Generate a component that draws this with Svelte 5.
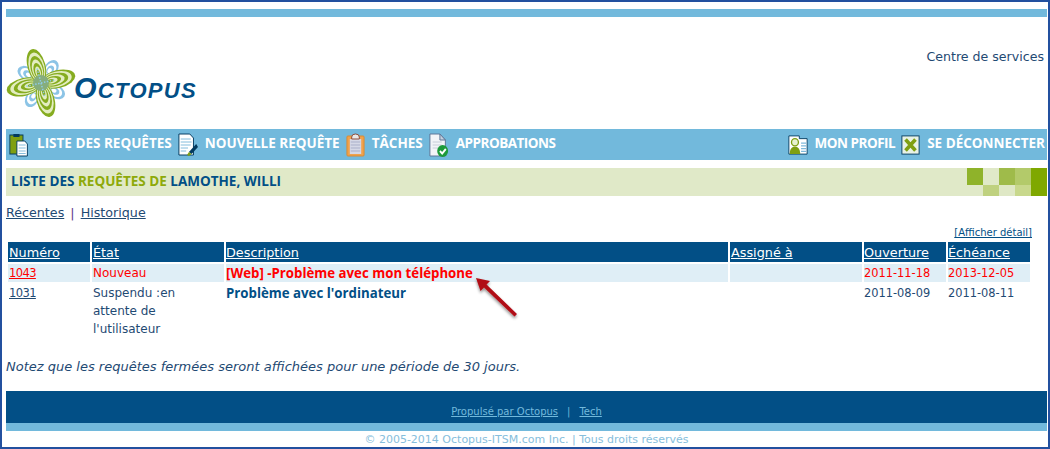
<script>
  const ringsBig = [0, 1, 2, 3, 4, 5, 6];
  const smallRings = [0, 1, 2, 3];
  const bigPetals = [-13, 75];
  const smallPetals = [-147, -55, 30, 120];

  const squares = ['#8fb32a', '#e0e9c8', '#9fbb4a', '#b3ca6a', '#7fa800', '#e0e9c8', '#bfd17f', '#dfe8c6', '#c8d88c', '#7fa800'];

  const columns = ['Numéro', 'État', 'Description', 'Assigné à', 'Ouverture', 'Échéance'];
</script>

<div class="frame">
  <div class="topbar"></div>

  <header class="brand">
    <div class="logo">
      <svg width="70" height="72" viewBox="-35 -36 70 72" aria-hidden="true">
        {#each smallPetals as angle}
          <g transform="rotate({angle}) translate(18 0)">
            {#each smallRings as r}
              <ellipse rx={9 - r * 2.1} ry={6.5 - r * 1.5} cx={-r} fill={r % 2 ? '#ffffff' : '#8cc4e6'} />
            {/each}
          </g>
        {/each}
        {#each bigPetals as angle}
          {#each [-1, 1] as side}
            <g transform="rotate({angle}) translate({side * 17.5} 0)">
              {#each ringsBig as r}
                <ellipse rx={17.5 - r * 2.3} ry={9 - r * 1.25} cx={-side * r * 1.3} fill={r % 2 ? '#e3edc0' : '#86ac20'} />
              {/each}
            </g>
          {/each}
        {/each}
        <circle r="8" fill="#86ad7c" />
        {#each bigPetals as angle}
          <path transform="rotate({angle})" d="M-15 0H15" stroke="#8fcbe6" stroke-width="1.500" stroke-dasharray="1.500 1.500" />
        {/each}
      </svg>
      <span class="wordmark"><span class="big">O</span>CTOPUS</span>
    </div>
    <span class="service">Centre de services</span>
  </header>

  <nav class="nav">
    <div class="nav-group">
      <a class="nav-item">
        <svg width="21" height="24" viewBox="0 0 24 24" preserveAspectRatio="none" aria-hidden="true">
          <rect x="1" y="2" width="15" height="19" fill="#7f9f12" stroke="#023a5e" />
          <rect x="5" y="1" width="7" height="3" fill="#023a5e" />
          <path d="M9 8h9l3 3v12H9z" fill="#fff" stroke="#023a5e" />
          <path d="M11 12h8M11 15h8M11 18h8M11 20.500h8" stroke="#7fb9da" />
        </svg>
        <span>LISTE DES REQUÊTES</span>
      </a>
      <a class="nav-item">
        <svg width="20" height="24" viewBox="0 0 22 24" preserveAspectRatio="none" aria-hidden="true">
          <path d="M1 1h12l4 4v17H1z" fill="#fff" stroke="#023a5e" />
          <path d="M3 6h11M3 9h12M3 12h11M3 15h8M3 18h6" stroke="#7fb9da" />
          <path d="M20 11l2 3-7 7-3-2z" fill="#023a5e" />
          <path d="M12 19l3 2-3 2-2-1z" fill="#7f9f12" />
        </svg>
        <span>NOUVELLE REQUÊTE</span>
      </a>
      <a class="nav-item">
        <svg width="19" height="24" viewBox="0 0 20 24" preserveAspectRatio="none" aria-hidden="true">
          <rect x="1" y="3" width="18" height="20" rx="1" fill="#f0a24c" stroke="#d98a30" />
          <rect x="4" y="6" width="12" height="15" fill="#d5d8e6" />
          <path d="M5 9h10M5 12h10M5 15h10M5 18h10" stroke="#a9aec8" />
          <path d="M6 4a4 3 0 0 1 8 0v2H6z" fill="#e8e8e8" stroke="#8a4a3a" />
        </svg>
        <span>TÂCHES</span>
      </a>
      <a class="nav-item tight">
        <svg width="20" height="24" viewBox="0 0 22 24" preserveAspectRatio="none" aria-hidden="true">
          <path d="M1 1h11l6 6v16H1z" fill="#f2f4f8" stroke="#5a7596" />
          <path d="M12 1v6h6z" fill="#c5d0de" stroke="#5a7596" />
          <path d="M4 9h10M4 12h10M4 15h6" stroke="#c5ccd8" />
          <circle cx="15" cy="18" r="6" fill="#1c9a3a" />
          <path d="M12 18l2.500 2.500 4-4.500" fill="none" stroke="#fff" stroke-width="2" />
        </svg>
        <span>APPROBATIONS</span>
      </a>
    </div>
    <div class="nav-group">
      <a class="nav-item tight">
        <svg width="20" height="20" viewBox="0 0 23 22" preserveAspectRatio="none" aria-hidden="true">
          <path d="M1 1h12v3h9v17H1z" fill="#fff" stroke="#023a5e" />
          <circle cx="8" cy="8" r="4" fill="#e8f2d0" stroke="#7f9f12" stroke-width="1.500" />
          <path d="M2 21c0-6 3-8 6-8s6 2 6 8z" fill="#7f9f12" />
          <path d="M15 9h6M15 12h6M15 15h6M15 18h6" stroke="#7fb9da" stroke-width="1.500" />
        </svg>
        <span>MON PROFIL</span>
      </a>
      <a class="nav-item">
        <svg width="19" height="20" viewBox="0 0 21 22" preserveAspectRatio="none" aria-hidden="true">
          <rect x="1" y="1" width="19" height="20" fill="#e8f2e6" stroke="#023a5e" />
          <path d="M5 5l11 12M16 5L5 17" stroke="#7f9f12" stroke-width="4" />
        </svg>
        <span>SE DÉCONNECTER</span>
      </a>
    </div>
  </nav>

  <div class="band">
    <h1>LISTE DES <em>REQUÊTES DE</em> LAMOTHE, WILLI</h1>
    <div class="squares" aria-hidden="true">
      {#each squares as color}
        <span style="background: {color}"></span>
      {/each}
    </div>
  </div>

  <div class="tabs"><a>Récentes</a> <span class="sep">|</span> <a>Historique</a></div>

  <div class="detail"><a>[Afficher détail]</a></div>

  <div class="table-wrap">
    <table>
      <colgroup>
        <col style="width: 82px" />
        <col style="width: 132px" />
        <col style="width: 502px" />
        <col style="width: 132px" />
        <col style="width: 82px" />
        <col style="width: 82px" />
      </colgroup>
      <thead>
        <tr>
          {#each columns as column}
            <th><a>{column}</a></th>
          {/each}
        </tr>
      </thead>
      <tbody>
        <tr class="new">
          <td class="num"><a>1043</a></td>
          <td>Nouveau</td>
          <td class="desc">[Web] -Problème avec mon téléphone</td>
          <td></td>
          <td class="date">2011-11-18</td>
          <td class="date">2013-12-05</td>
        </tr>
        <tr>
          <td class="num"><a>1031</a></td>
          <td>Suspendu :en<br />attente de<br />l'utilisateur</td>
          <td class="desc">Problème avec l'ordinateur</td>
          <td></td>
          <td class="date">2011-08-09</td>
          <td class="date">2011-08-11</td>
        </tr>
      </tbody>
    </table>
    <svg class="arrow" width="50" height="50" viewBox="0 0 50 50" aria-hidden="true">
      <defs>
        <filter id="arrow-shadow" x="-20%" y="-20%" width="150%" height="150%">
          <feDropShadow dx="0" dy="2" stdDeviation="1.500" flood-color="#000" flood-opacity="0.45" />
        </filter>
      </defs>
      <path filter="url(#arrow-shadow)" fill="#b00c14" d="M3 3l14 3-3.500 3.500L44 39l-2.500 2.500L11 12.500 7.500 16z" />
    </svg>
  </div>

  <p class="note">Notez que les requêtes fermées seront affichées pour une période de 30 jours.</p>

  <footer class="footer">
    <div class="footer-dark"><a>Propulsé par Octopus</a><span class="pipe">|</span><a>Tech</a></div>
    <div class="footer-light"></div>
    <div class="copyright">© 2005-2014 Octopus-ITSM.com Inc. | Tous droits réservés</div>
  </footer>
</div>

<style>
  :global(body) {
    margin: 0;
    background: #fff;
  }

  .frame {
    box-sizing: border-box;
    position: relative;
    width: 1050px;
    height: 449px;
    overflow: hidden;
    border: 2px solid #23509f;
    padding: 7px 1px 0 4px;
    font-family: "DejaVu Sans", Verdana, sans-serif;
    font-size: 12px;
    color: #024f86;
  }

  a {
    color: inherit;
    text-decoration: underline;
  }

  .topbar {
    height: 8px;
    background: #72b9dc;
  }

  .brand {
    height: 112px;
    display: flex;
    justify-content: space-between;
  }

  .logo {
    display: flex;
    align-items: flex-end;
    padding-top: 30px;
    height: 72px;
  }

  .wordmark {
    font-family: "Liberation Sans", Arial, sans-serif;
    font-style: italic;
    font-weight: 700;
    font-size: 22px;
    line-height: 24px;
    letter-spacing: 1.3px;
    color: #024f86;
    margin: 0 0 16px -2px;
  }

  .wordmark .big {
    font-size: 29px;
  }

  .service {
    font-size: 12.6px;
    margin: 32px 3px 0 0;
    color: #1f4a73;
  }

  .nav {
    height: 31px;
    background: #72b9dc;
    display: flex;
    justify-content: space-between;
    align-items: center;
    padding: 0 2px 0 3px;
  }

  .nav-group {
    display: flex;
    gap: 6px;
  }

  .nav-item {
    display: flex;
    align-items: center;
    gap: 7px;
    color: #fff;
    font-family: "Open Sans", "DejaVu Sans", sans-serif;
    font-weight: 700;
    font-size: 13.5px;
    text-decoration: none;
    white-space: nowrap;
  }

  .nav-item span {
    margin-bottom: 3px;
  }

  .tight {
    letter-spacing: -0.5px;
  }

  .band {
    margin-top: 8px;
    height: 28px;
    background: #e0e9c8;
    display: flex;
    justify-content: space-between;
  }

  h1 {
    margin: 0;
    padding-left: 5px;
    font-family: "Open Sans", "DejaVu Sans", sans-serif;
    font-size: 13.5px;
    line-height: 26px;
    font-weight: 700;
    color: #024f86;
  }

  h1 em {
    font-style: normal;
    color: #8ea90a;
  }

  .squares {
    display: grid;
    grid-template-columns: repeat(5, 16px);
    grid-template-rows: 17px 11px;
  }

  .tabs {
    margin-top: 9px;
    line-height: 16px;
    font-size: 12.7px;
    color: #1f4a73;
  }

  .sep {
    color: #5a3a8a;
    margin: 0 2px;
  }

  .detail {
    margin: 6px 15px 0 0;
    text-align: right;
    font-size: 10px;
    line-height: 11px;
  }

  .table-wrap {
    position: relative;
    margin-top: 2px;
  }

  table {
    border-collapse: separate;
    border-spacing: 2px;
    table-layout: fixed;
    width: 1026px;
    font-size: 12px;
  }

  th {
    background: #024f86;
    color: #fff;
    text-align: left;
    font-weight: 400;
    font-size: 12.8px;
    height: 20px;
    padding: 0 1px;
  }

  th:nth-child(3),
  th:nth-child(n + 5) {
    padding-left: 0;
  }

  td {
    padding: 0 1px;
    vertical-align: top;
    line-height: 18px;
    color: #1f4a73;
  }

  .desc {
    padding-left: 0;
    font-family: "Open Sans", "DejaVu Sans", sans-serif;
    font-weight: 700;
    font-size: 13.25px;
    color: #024f86;
  }

  .date {
    padding-left: 0;
    font-size: 11.4px;
  }

  .num {
    font-size: 11.5px;
    letter-spacing: -0.6px;
  }

  .new td {
    background: #dfeef6;
    color: #f00;
  }

  .arrow {
    position: absolute;
    left: 467px;
    top: 35px;
  }

  .note {
    margin: 0;
    position: absolute;
    left: 4px;
    top: 357px;
    font-style: italic;
    font-size: 13px;
    color: #1f4a73;
  }

  .footer {
    position: absolute;
    left: 4px;
    top: 389px;
    width: 1041px;
  }

  .footer-dark {
    height: 32px;
    background: #024f86;
    color: #72b9dc;
    font-size: 10px;
    display: flex;
    justify-content: center;
    align-items: flex-end;
    padding-bottom: 6px;
    box-sizing: border-box;
  }

  .pipe {
    margin: 0 9px;
  }

  .footer-light {
    height: 8px;
    background: #72b9dc;
  }

  .copyright {
    height: 16px;
    line-height: 17px;
    text-align: center;
    font-size: 11px;
    color: #86bedc;
  }
</style>
